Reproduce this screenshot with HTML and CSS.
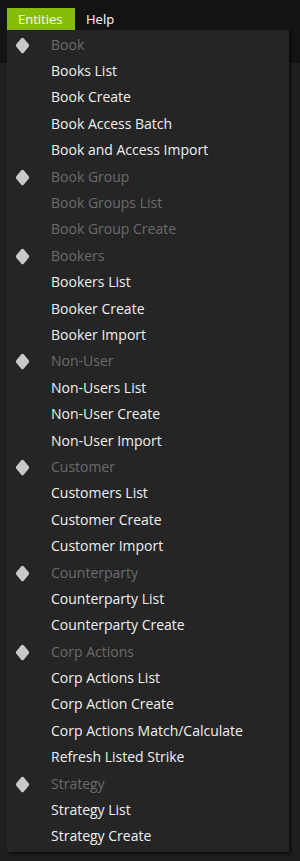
FILE: index.html
```html
<!DOCTYPE html>
<html>
<head>
<meta charset="utf-8">
<link rel="stylesheet" href="styles.css">
</head>
<body>
<div class="topbar">
  <nav class="menubar">
    <span class="menu-btn active">Entities</span>
    <span class="menu-btn">Help</span>
  </nav>
</div>
<div class="content"></div>
<div class="dropdown">
  <div class="row header"><svg class="dia" viewBox="0 0 15 17"><path d="M6.3 1.3 Q7.5 0 8.7 1.3 L13.7 7.3 Q14.7 8.5 13.7 9.7 L8.7 15.7 Q7.5 17 6.3 15.7 L1.3 9.7 Q0.3 8.5 1.3 7.3 Z"/></svg><span>Book</span></div>
  <div class="row">Books List</div>
  <div class="row">Book Create</div>
  <div class="row">Book Access Batch</div>
  <div class="row">Book and Access Import</div>
  <div class="row header"><svg class="dia" viewBox="0 0 15 17"><path d="M6.3 1.3 Q7.5 0 8.7 1.3 L13.7 7.3 Q14.7 8.5 13.7 9.7 L8.7 15.7 Q7.5 17 6.3 15.7 L1.3 9.7 Q0.3 8.5 1.3 7.3 Z"/></svg><span>Book Group</span></div>
  <div class="row disabled">Book Groups List</div>
  <div class="row disabled">Book Group Create</div>
  <div class="row header"><svg class="dia" viewBox="0 0 15 17"><path d="M6.3 1.3 Q7.5 0 8.7 1.3 L13.7 7.3 Q14.7 8.5 13.7 9.7 L8.7 15.7 Q7.5 17 6.3 15.7 L1.3 9.7 Q0.3 8.5 1.3 7.3 Z"/></svg><span>Bookers</span></div>
  <div class="row">Bookers List</div>
  <div class="row">Booker Create</div>
  <div class="row">Booker Import</div>
  <div class="row header"><svg class="dia" viewBox="0 0 15 17"><path d="M6.3 1.3 Q7.5 0 8.7 1.3 L13.7 7.3 Q14.7 8.5 13.7 9.7 L8.7 15.7 Q7.5 17 6.3 15.7 L1.3 9.7 Q0.3 8.5 1.3 7.3 Z"/></svg><span>Non-User</span></div>
  <div class="row">Non-Users List</div>
  <div class="row">Non-User Create</div>
  <div class="row">Non-User Import</div>
  <div class="row header"><svg class="dia" viewBox="0 0 15 17"><path d="M6.3 1.3 Q7.5 0 8.7 1.3 L13.7 7.3 Q14.7 8.5 13.7 9.7 L8.7 15.7 Q7.5 17 6.3 15.7 L1.3 9.7 Q0.3 8.5 1.3 7.3 Z"/></svg><span>Customer</span></div>
  <div class="row">Customers List</div>
  <div class="row">Customer Create</div>
  <div class="row">Customer Import</div>
  <div class="row header"><svg class="dia" viewBox="0 0 15 17"><path d="M6.3 1.3 Q7.5 0 8.7 1.3 L13.7 7.3 Q14.7 8.5 13.7 9.7 L8.7 15.7 Q7.5 17 6.3 15.7 L1.3 9.7 Q0.3 8.5 1.3 7.3 Z"/></svg><span>Counterparty</span></div>
  <div class="row">Counterparty List</div>
  <div class="row">Counterparty Create</div>
  <div class="row header"><svg class="dia" viewBox="0 0 15 17"><path d="M6.3 1.3 Q7.5 0 8.7 1.3 L13.7 7.3 Q14.7 8.5 13.7 9.7 L8.7 15.7 Q7.5 17 6.3 15.7 L1.3 9.7 Q0.3 8.5 1.3 7.3 Z"/></svg><span>Corp Actions</span></div>
  <div class="row">Corp Actions List</div>
  <div class="row">Corp Action Create</div>
  <div class="row">Corp Actions Match/Calculate</div>
  <div class="row">Refresh Listed Strike</div>
  <div class="row header"><svg class="dia" viewBox="0 0 15 17"><path d="M6.3 1.3 Q7.5 0 8.7 1.3 L13.7 7.3 Q14.7 8.5 13.7 9.7 L8.7 15.7 Q7.5 17 6.3 15.7 L1.3 9.7 Q0.3 8.5 1.3 7.3 Z"/></svg><span>Strategy</span></div>
  <div class="row">Strategy List</div>
  <div class="row">Strategy Create</div>
</div>
</body>
</html>
```

FILE: styles.css
```css
html, body {
  margin: 0;
  padding: 0;
  height: 100%;
}
body {
  background: #1f1f1f;
  font-family: "Open Sans", "Noto Sans", sans-serif;
  font-size: 14px;
  color: #f2f2f2;
  overflow: hidden;
}
.topbar {
  height: 63px;
  background: #131313;
}
.menubar {
  display: flex;
  padding: 8px 0 0 7px;
  height: 22px;
}
.menu-btn {
  display: flex;
  align-items: center;
  padding: 0 11px;
  height: 22px;
  color: #ffffff;
  font-size: 13px;
}
.menu-btn.active {
  background: #86bd0b;
  color: #f4ffe0;
  width: 46px;
}
.content {
  height: calc(100% - 63px);
}
.dropdown {
  position: absolute;
  top: 30px;
  left: 7px;
  width: 282px;
  height: 822px;
  box-sizing: border-box;
  padding-top: 1px;
  background: #252525;
  box-shadow: 2px 2px 3px rgba(0, 0, 0, 0.6);
}
.row {
  height: 26.4px;
  display: flex;
  align-items: center;
  padding-left: 44px;
  color: #f0f0f0;
  white-space: nowrap;
}
.row.header {
  padding-left: 8px;
  color: #6b6b6b;
}
.row.header .dia {
  position: relative;
  top: 1px;
}
.row.disabled {
  color: #6b6b6b;
}
.dia {
  width: 15px;
  height: 17px;
  fill: #c9c9c9;
  margin-right: 21px;
}
```
